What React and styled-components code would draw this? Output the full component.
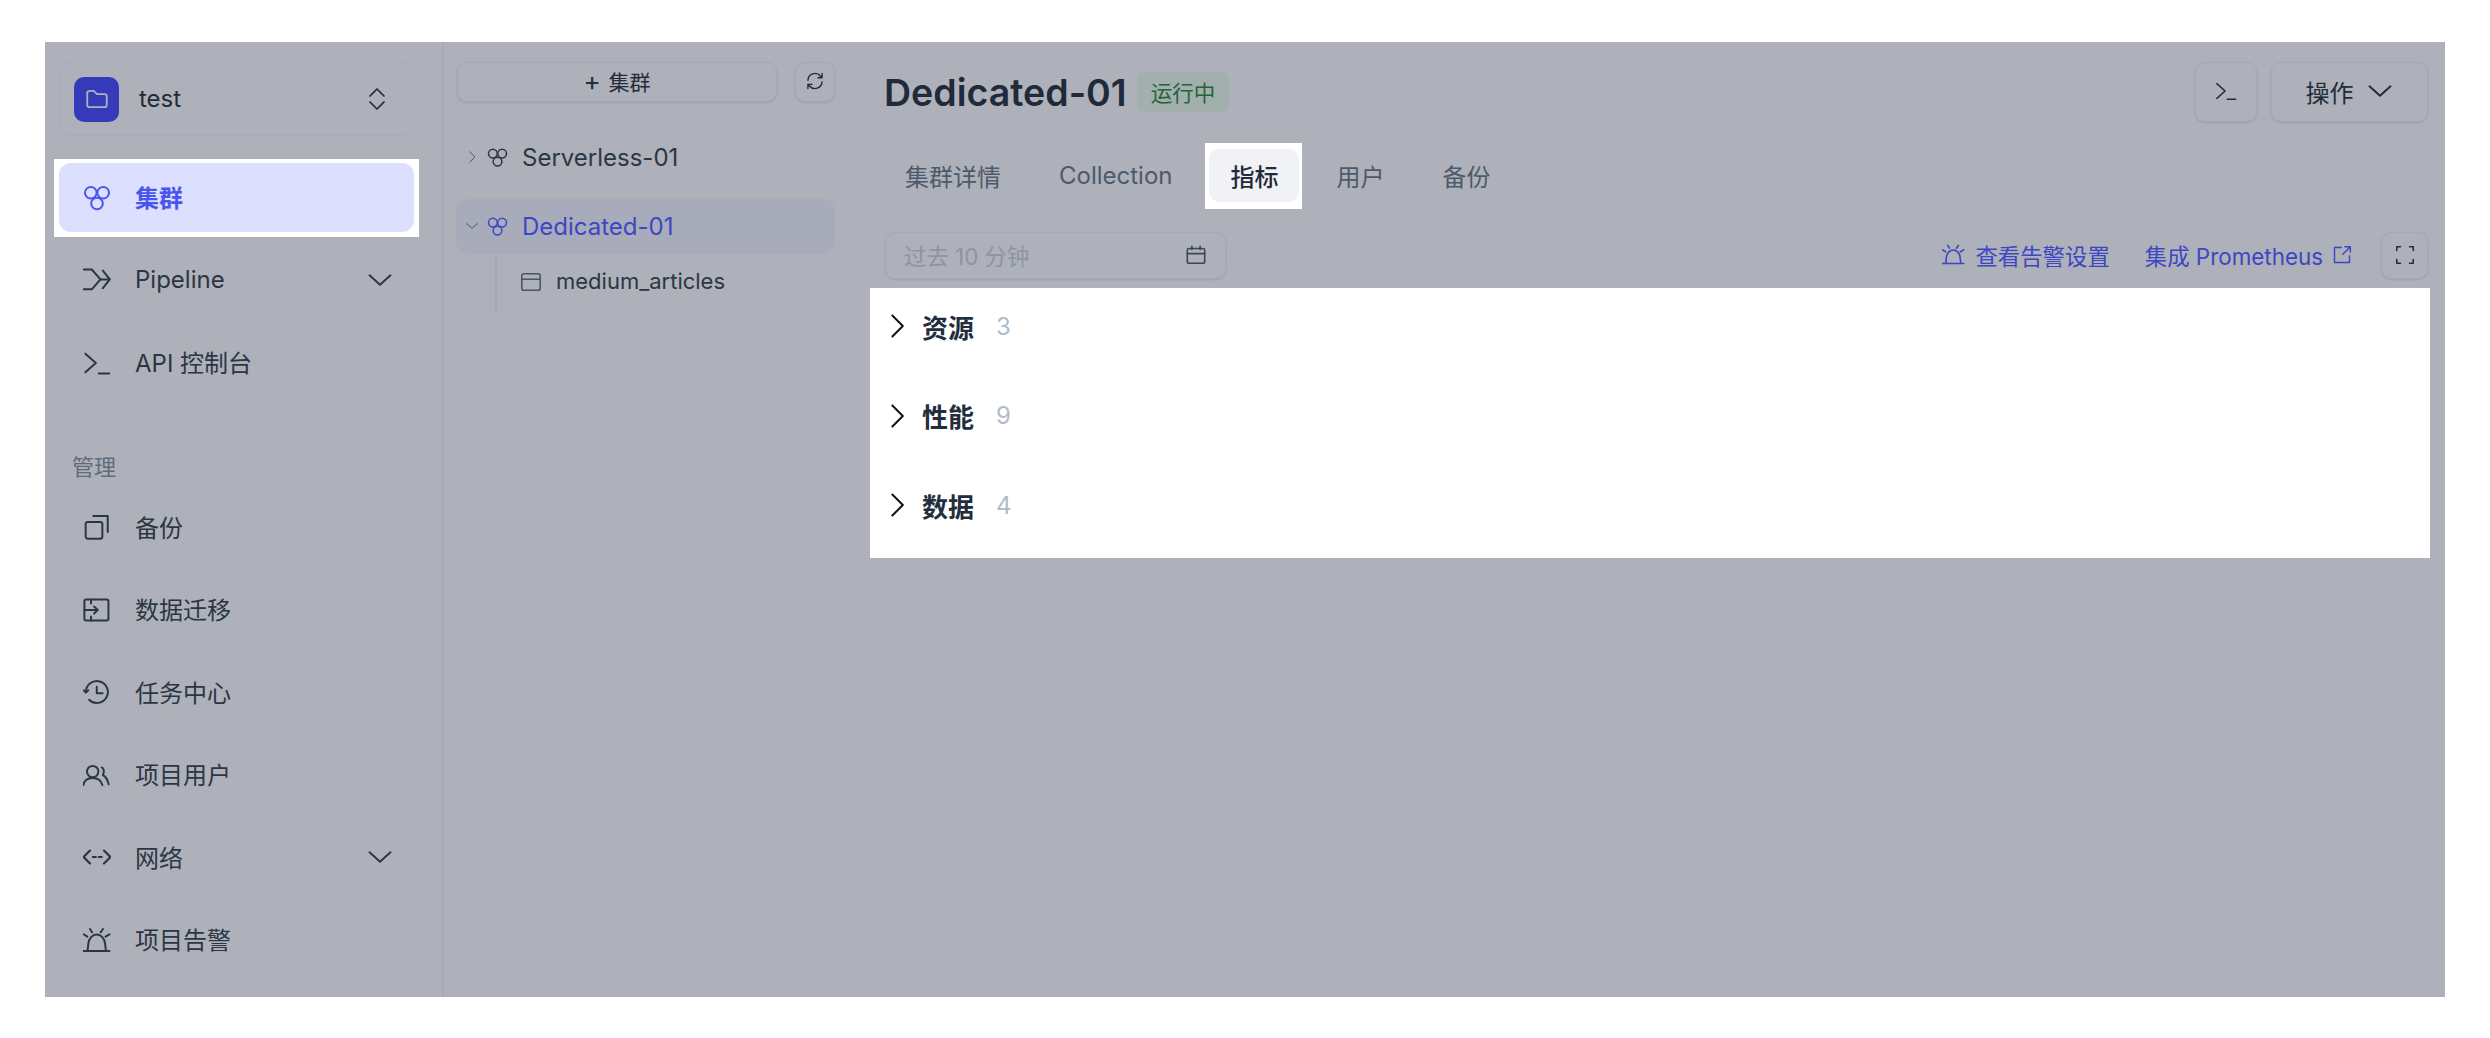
import React from 'react'
import styled, { createGlobalStyle } from 'styled-components'

const Global = createGlobalStyle`
  html, body { margin: 0; padding: 0; background: #fff; }
  body { font-family: Inter, "Noto Sans CJK SC", sans-serif; color: #222c3a; }
  * { box-sizing: border-box; }
`

const Svg = ({ size = 28, sw = 1.7, children, color }) => (
  <svg width={size} height={size} viewBox="0 0 24 24" fill="none" stroke={color || 'currentColor'} strokeWidth={sw} strokeLinecap="round" strokeLinejoin="round" style={{ flex: 'none' }}>
    {children}
  </svg>
)

const Cluster = (p) => (
  <Svg {...p}>
    <circle cx="6.7" cy="7.5" r="5" />
    <circle cx="17.3" cy="7.5" r="5" />
    <circle cx="12" cy="16.7" r="5" />
  </Svg>
)
const Pipeline = (p) => (
  <Svg {...p}>
    <path d="M.5 3h7l7.500 8.500L7.500 20h-7" />
    <path d="M15 11.500h7.500M17 4l6 7.500-6 7.500" />
  </Svg>
)
const Term = (p) => (
  <Svg {...p}>
    <path d="M2 4l9 8-9 8" />
    <path d="M13.500 21h9" />
  </Svg>
)
const Backup = (p) => (
  <Svg {...p}>
    <rect x="2.300" y="7.700" width="14.300" height="14.300" rx="1.800" />
    <path d="M8.800 2.600h12.400v13.700" />
  </Svg>
)
const Migrate = (p) => (
  <Svg {...p}>
    <rect x="1.200" y="3" width="20.600" height="18" rx="1.500" />
    <path d="M1.200 12h11.500M9.500 9l3.200 3-3.200 3M6.900 3v3.500M6.900 17.500V21" />
  </Svg>
)
const Clock = (p) => (
  <Svg {...p}>
    <path d="M2.500 12a9.400 9.400 0 1 1 2.700 6.600" />
    <path d="M.5 10.500l2 2 2-2M11.800 7.500V13h5" />
  </Svg>
)
const Users = (p) => (
  <Svg {...p}>
    <circle cx="8.300" cy="9.100" r="4.900" />
    <path d="M.3 20.600c.7-3.800 3.800-6 8-6s7.300 2.200 8.300 6" />
    <path d="M16 5.500c2 .8 2.500 3.500 1 6.500 2.500 1.200 4 4 5 8" />
  </Svg>
)
const Network = (p) => (
  <Svg {...p} sw={1.900}>
    <path d="M6 6.500L.5 12 6 17.500M18 6.500l5.500 5.500-5.500 5.500M8.500 12h2.500M13.500 12H16" />
  </Svg>
)
const Alarm = (p) => (
  <Svg {...p}>
    <path d="M.5 21.400h22.200M3.900 21.400l.7-6.400a7.200 8.700 0 0 1 14.300 0l.8 6.400" />
    <path d="M6 2.600l1.700 2.800M17.100 2.600l-2 2.800M.5 7.100l3.200 2M22.700 7.100l-3.400 2" />
  </Svg>
)
const Down = (p) => (
  <Svg {...p}><path d="M3 8l9 8 9-8" /></Svg>
)
const Right = (p) => (
  <Svg {...p}><path d="M8 3l9 9-9 9" /></Svg>
)
const UpDown = (p) => (
  <Svg {...p}><path d="M5 9l7-7 7 7M5 15l7 7 7-7" /></Svg>
)
const Folder = (p) => (
  <Svg {...p}><path d="M3 6.500a2 2 0 0 1 2-2h4l3 3h7a2 2 0 0 1 2 2v8a2 2 0 0 1-2 2H5a2 2 0 0 1-2-2z" /></Svg>
)
const Sync = (p) => (
  <Svg {...p}>
    <path d="M3.500 11a8.500 8.500 0 0 1 15-5l2 2M20.500 3v5h-5" />
    <path d="M20.500 13a8.500 8.500 0 0 1-15 5l-2-2M3.500 21v-5h5" />
  </Svg>
)
const TableIco = (p) => (
  <Svg {...p}>
    <rect x="2" y="3" width="20" height="18" rx="2" />
    <path d="M2 9h20" />
  </Svg>
)
const Calendar = (p) => (
  <Svg {...p}>
    <rect x="2.500" y="5" width="19" height="16" rx="2" />
    <path d="M2.500 10.500h19M7.500 2.500V6M16.500 2.500V6" />
  </Svg>
)
const External = (p) => (
  <Svg {...p}>
    <path d="M11 3H3v18h18v-8" />
    <path d="M13 11l9-9M15.500 2H22v6.500" />
  </Svg>
)
const Expand = (p) => (
  <Svg {...p}>
    <path d="M3 7V3h4M17 3h4v4M21 17v4h-4M7 21H3v-4" />
  </Svg>
)

const Frame = styled.div`
  display: flex;
  width: 2400px;
  height: 955px;
  margin: 42px 0 41px 45px;
  background: #aeb1b9;
  overflow: hidden;
`
const Sidebar = styled.aside`
  flex: none;
  width: 399px;
  padding: 20px 28px 0 14px;
  border-right: 2px solid #a7abb3;
  display: flex;
  flex-direction: column;
`
const ProjectSelect = styled.div`
  display: flex;
  align-items: center;
  height: 74px;
  padding: 0 24px 0 14px;
  border: 1.500px solid #a8acb4;
  border-radius: 10px;
  color: #222c3a;
  font-size: 24px;
`
const ProjectLogo = styled.div`
  width: 45px;
  height: 45px;
  border-radius: 10px;
  background: #353bb8;
  color: #aeb1b9;
  display: flex;
  align-items: center;
  justify-content: center;
  margin-right: 20px;
`
const ProjectName = styled.span`
  flex: 1;
  padding-bottom: 2px;
`
const NavList = styled.nav`
  display: flex;
  flex-direction: column;
  gap: 13.500px;
  margin-top: ${(p) => p.$top || 0}px;
`
const NavItem = styled.div`
  height: 69px;
  display: flex;
  align-items: center;
  padding: 0 20px 0 24px;
  gap: 24px;
  border-radius: 12px;
  font-size: 24px;
  color: ${(p) => (p.$active ? '#4a55f0' : '#2b3644')};
  font-weight: ${(p) => (p.$active ? 600 : 400)};
  background: ${(p) => (p.$active ? '#dcdffd' : 'transparent')};
`
const NavSpot = styled.div`
  background: #fff;
  padding: 4px 5px 5px;
  margin: -4px -5px -5px;
`
const NavLabel = styled.span`
  flex: 1;
  padding-bottom: 2px;
`
const SectionTitle = styled.div`
  height: 30px;
  line-height: 30px;
  margin: 55px 0 10.500px 13px;
  font-size: 22px;
  color: #5f6b7c;
`
const TreeColumn = styled.section`
  flex: none;
  width: 407px;
  padding: 20px 16px 0 12px;
`
const TreeTools = styled.div`
  display: flex;
  gap: 18px;
  padding-left: 1px;
`
const GhostButton = styled.button`
  height: ${(p) => p.$h || 40}px;
  width: ${(p) => (p.$w ? `${p.$w}px` : 'auto')};
  flex: ${(p) => (p.$w ? 'none' : '1')};
  display: flex;
  align-items: center;
  justify-content: center;
  gap: ${(p) => p.$gap || 8}px;
  background: #aeb1b9;
  border: 1.500px solid #a2aab4;
  border-radius: 10px;
  box-shadow: 0 1px 2px rgba(70, 80, 100, 0.18);
  color: #222c3a;
  font: 400 ${(p) => p.$fs || 21}px Inter, "Noto Sans CJK SC", sans-serif;
  padding: 0 0 2px;
`
const PlusSign = styled.span`
  font-size: 26px;
  line-height: 1;
`
const TreeRow = styled.div`
  height: 54px;
  display: flex;
  align-items: center;
  border-radius: 12px;
  margin-top: ${(p) => p.$top || 0}px;
  padding-left: 5px;
  background: ${(p) => (p.$active ? '#a8abb9' : 'transparent')};
  color: ${(p) => (p.$active ? '#3d46c4' : '#2b3644')};
  font-size: 24px;
`
const Caret = styled.span`
  width: 21px;
  display: flex;
  justify-content: center;
  margin-right: 5px;
  color: #4a5564;
`
const TreeName = styled.span`
  margin-left: 14px;
`
const SubTree = styled.div`
  margin: 4px 0 0 39px;
  height: 55px;
  border-left: 2px solid #a2a6ae;
  padding-left: 23px;
  display: flex;
  align-items: flex-start;
  gap: 14px;
  font-size: 22px;
  color: #2b3644;
  line-height: 48px;
`
const TableMark = styled.span`
  display: flex;
  height: 49px;
  align-items: center;
  color: #4a5564;
`
const Main = styled.main`
  flex: 1;
  min-width: 0;
  padding: 20px 0 0 0;
  display: flex;
  flex-direction: column;
`
const Head = styled.div`
  display: flex;
  align-items: center;
  height: 60px;
  padding: 0 17px 0 33px;
`
const Title = styled.h1`
  margin: 0;
  font-size: 37.500px;
  font-weight: 600;
  color: #1f2a3a;
`
const Badge = styled.span`
  margin-left: 10px;
  height: 40px;
  padding: 0 14px 2px;
  display: flex;
  align-items: center;
  border-radius: 8px;
  background: #a2afad;
  color: #22643c;
  font-size: 21.500px;
`
const Spacer = styled.div`
  flex: 1;
`
const HeadActions = styled.div`
  display: flex;
  gap: 14px;
`
const Tabs = styled.div`
  display: flex;
  gap: 16px;
  margin: 27px 0 0 33px;
`
const Tab = styled.div`
  height: 53px;
  display: flex;
  align-items: center;
  padding: 0 21px;
  border-radius: 10px;
  font-size: 24px;
  color: ${(p) => (p.$active ? '#222c3a' : '#4d5a6c')};
  font-weight: ${(p) => (p.$active ? 500 : 400)};
  background: ${(p) => (p.$active ? '#f1f2f5' : 'transparent')};
`
const TabSpot = styled.div`
  background: #fff;
  padding: 6px 3px 7px 4px;
  margin: -6px -3px -7px -4px;
`
const Toolbar = styled.div`
  display: flex;
  align-items: center;
  height: 47px;
  margin-top: 30px;
  padding: 0 17px 0 34px;
`
const DatePicker = styled.div`
  width: 341px;
  height: 47px;
  display: flex;
  align-items: center;
  justify-content: space-between;
  padding: 0 18px 2px;
  border: 1.500px solid #a2aab4;
  border-radius: 10px;
  box-shadow: 0 1px 2px rgba(70, 80, 100, 0.18);
  color: #8c95a3;
  font-size: 22.400px;
`
const DateIcon = styled.span`
  display: flex;
  color: #3a4556;
`
const LinkAction = styled.a`
  display: flex;
  align-items: center;
  gap: ${(p) => p.$gap || 10}px;
  margin-right: ${(p) => p.$mr || 0}px;
  padding-bottom: 2px;
  color: #3d46c4;
  font-size: 22.400px;
`
const Panel = styled.div`
  margin: 9px 15px 0 19px;
  height: 270px;
  background: #fff;
  padding-top: 18px;
  display: flex;
  flex-direction: column;
  gap: 49.500px;
`
const MetricRow = styled.div`
  height: 40px;
  display: flex;
  align-items: center;
  padding-left: 13px;
  color: #111;
`
const MetricName = styled.span`
  margin-left: 11px;
  font-size: 26px;
  font-weight: 600;
  color: #222e3e;
`
const MetricCount = styled.span`
  margin-left: 22px;
  font-size: 24px;
  color: #aebccb;
`

const navTop = [
  { label: '集群', icon: Cluster, active: true },
  { label: 'Pipeline', icon: Pipeline, more: true },
  { label: 'API 控制台', icon: Term },
]
const navManage = [
  { label: '备份', icon: Backup },
  { label: '数据迁移', icon: Migrate },
  { label: '任务中心', icon: Clock },
  { label: '项目用户', icon: Users },
  { label: '网络', icon: Network, more: true },
  { label: '项目告警', icon: Alarm },
]
const tabs = ['集群详情', 'Collection', '指标', '用户', '备份']
const metrics = [['资源', 3], ['性能', 9], ['数据', 4]]

const renderNav = (item) => {
  const Icon = item.icon
  const row = (
    <NavItem key={item.label} $active={item.active}>
      <Icon size={28} />
      <NavLabel>{item.label}</NavLabel>
      {item.more && <Down size={28} />}
    </NavItem>
  )
  return item.active ? <NavSpot key={item.label}>{row}</NavSpot> : row
}

export default function App() {
  return (
    <>
      <Global />
      <Frame>
        <Sidebar>
          <ProjectSelect>
            <ProjectLogo><Folder size={26} /></ProjectLogo>
            <ProjectName>test</ProjectName>
            <UpDown size={24} />
          </ProjectSelect>
          <NavList $top={27}>{navTop.map(renderNav)}</NavList>
          <SectionTitle>管理</SectionTitle>
          <NavList>{navManage.map(renderNav)}</NavList>
        </Sidebar>

        <TreeColumn>
          <TreeTools>
            <GhostButton><PlusSign>+</PlusSign> 集群</GhostButton>
            <GhostButton $w={40}><Sync size={20} /></GhostButton>
          </TreeTools>
          <TreeRow $top={28}>
            <Caret><Right size={14} /></Caret>
            <Cluster size={21} />
            <TreeName>Serverless-01</TreeName>
          </TreeRow>
          <TreeRow $top={15} $active>
            <Caret><Down size={14} /></Caret>
            <Cluster size={21} />
            <TreeName>Dedicated-01</TreeName>
          </TreeRow>
          <SubTree>
            <TableMark><TableIco size={22} /></TableMark>
            medium_articles
          </SubTree>
        </TreeColumn>

        <Main>
          <Head>
            <Title>Dedicated-01</Title>
            <Badge>运行中</Badge>
            <Spacer />
            <HeadActions>
              <GhostButton $w={62} $h={60}><Term size={22} /></GhostButton>
              <GhostButton $w={157} $h={60} $fs={24} $gap={12}>操作 <Down size={28} /></GhostButton>
            </HeadActions>
          </Head>
          <Tabs>
            {tabs.map((t) =>
              t === '指标' ? (
                <TabSpot key={t}><Tab $active>{t}</Tab></TabSpot>
              ) : (
                <Tab key={t}>{t}</Tab>
              )
            )}
          </Tabs>
          <Toolbar>
            <DatePicker>
              过去 10 分钟
              <DateIcon><Calendar size={22} /></DateIcon>
            </DatePicker>
            <Spacer />
            <LinkAction $mr={35}><Alarm size={23} />查看告警设置</LinkAction>
            <LinkAction $mr={29} $gap={9}>集成 Prometheus <External size={20} /></LinkAction>
            <GhostButton $w={47} $h={47}><Expand size={22} /></GhostButton>
          </Toolbar>
          <Panel>
            {metrics.map(([name, count]) => (
              <MetricRow key={name}>
                <Right size={28} />
                <MetricName>{name}</MetricName>
                <MetricCount>{count}</MetricCount>
              </MetricRow>
            ))}
          </Panel>
        </Main>
      </Frame>
    </>
  )
}
